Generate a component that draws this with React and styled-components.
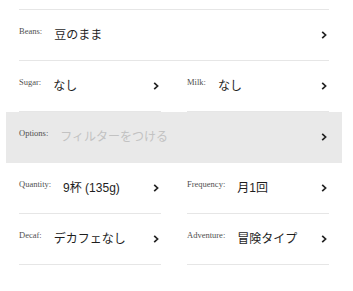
import React from "react";
import styled, { createGlobalStyle } from "styled-components";

const GlobalStyle = createGlobalStyle`
  body {
    margin: 0;
    background: #fff;
    font-family: "Liberation Sans", "Noto Sans CJK JP", sans-serif;
  }
`;

function Chevron() {
  return (
    <ChevronIcon width="6" height="8" viewBox="0 0 6 8">
      <path d="M1.2 0.8 L4.6 4 L1.2 7.2" fill="none" stroke="#222" strokeWidth="1.7" />
    </ChevronIcon>
  );
}

function Field({ label, value, placeholder }) {
  return (
    <Item>
      <Label>{label}</Label>
      <Value $empty={!value}>{value || placeholder}</Value>
      <Chevron />
    </Item>
  );
}

function App() {
  return (
    <>
      <GlobalStyle />
      <Page>
        <List>
          <Field label="Beans:" value="豆のまま" />
          <Pair>
            <Field label="Sugar:" value="なし" />
            <Field label="Milk:" value="なし" />
          </Pair>
          <Highlight>
            <Field label="Options:" placeholder="フィルターをつける" />
          </Highlight>
          <Pair>
            <Field label="Quantity:" value="9杯 (135g)" />
            <Field label="Frequency:" value="月1回" />
          </Pair>
          <Pair>
            <Field label="Decaf:" value="デカフェなし" />
            <Field label="Adventure:" value="冒険タイプ" />
          </Pair>
        </List>
      </Page>
    </>
  );
}

export default App;

// ---------------- styles ----------------
const Page = styled.div`
  padding: 9px 0 0 19px;
`;

const List = styled.div`
  width: 310px;
  border-top: 1px solid #e6e6e6;
`;

const Pair = styled.div`
  display: grid;
  grid-template-columns: 1fr 1fr;
  column-gap: 26px;
`;

const Item = styled.div`
  display: flex;
  align-items: center;
  height: 50px;
  border-bottom: 1px solid #e6e6e6;
`;

const Highlight = styled.div`
  margin: 0 -13px;
  padding: 0 13px;
  background: #e9e9e9;

  ${Item} {
    border-bottom-color: transparent;
  }
`;

const Label = styled.span`
  align-self: flex-start;
  margin: 16px 12px 0 0;
  font-family: "Liberation Serif", serif;
  font-size: 8.5px;
  line-height: 10px;
  color: #4f4f4f;
  white-space: nowrap;
`;

const Value = styled.span`
  flex: 1;
  font-size: 12px;
  line-height: 16px;
  color: ${(p) => (p.$empty ? "#c2c2c2" : "#1e1e1e")};
  white-space: nowrap;
`;

const ChevronIcon = styled.svg`
  flex: none;
  margin-right: 2px;
`;
